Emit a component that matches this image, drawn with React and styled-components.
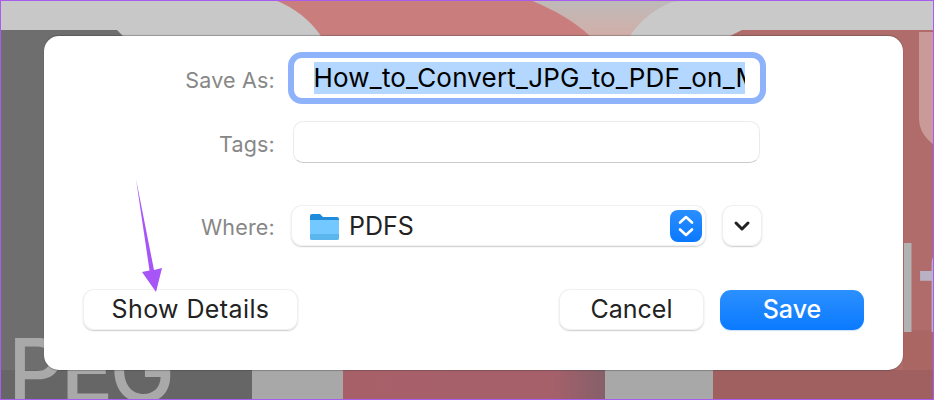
import React from "react";
import styled, { createGlobalStyle } from "styled-components";

const Global = createGlobalStyle`
  html, body { margin: 0; padding: 0; width: 934px; height: 400px; overflow: hidden; }
  body { font-family: Inter, "Liberation Sans", sans-serif; background: #6e6e6e; }
  * { box-sizing: border-box; }
`;

const Page = styled.div`
  position: relative;
  width: 934px;
  height: 400px;
  overflow: hidden;
  padding: 36px 31px 30px 44px;
`;

const Backdrop = styled.svg`
  position: absolute;
  inset: 0;
  width: 934px;
  height: 400px;
`;

const BackdropWord = styled.text`
  font-family: Inter, "Liberation Sans", sans-serif;
  font-weight: 500;
  letter-spacing: ${(p) => p.$tracking || 0}px;
  fill: ${(p) => p.$ink || "#a9a9a9"};
`;

const Frame = styled.div`
  position: absolute;
  inset: 0;
  border: 1.5px solid #a95cf0;
  pointer-events: none;
`;

const Dialog = styled.div`
  position: relative;
  width: 859px;
  height: 334px;
  background: #fff;
  border-radius: 15px;
  padding: 16px 39px 0;
  display: flex;
  flex-direction: column;
  box-shadow: 0 -1px 1px rgba(60, 60, 60, 0.35), 0 1px 1px rgba(60, 60, 60, 0.35);
`;

const Row = styled.div`
  display: flex;
  align-items: center;
  margin-top: ${(p) => p.$top || 0}px;
  margin-left: -39px;
`;

const Label = styled.div`
  width: 231px;
  flex: none;
  text-align: right;
  font-size: 21.5px;
  color: #878787;
  letter-spacing: 0.2px;
  padding-top: 3px;
`;

const FocusRing = styled.div`
  margin-left: 13px;
  width: 478px;
  height: 52px;
  border: 6.500px solid #8fb3fb;
  border-radius: 14px;
  background: #fff;
  padding: 3.500px 15.500px 3.500px 19.500px;
  overflow: hidden;
  display: flex;
`;

const Selected = styled.div`
  flex: 1;
  height: 32px;
  overflow: hidden;
  white-space: nowrap;
  background: #b3d7ff;
  color: #000;
  font-size: 26px;
  letter-spacing: 0.2px;
  line-height: 32px;
`;

const TagField = styled.div`
  margin-left: 18px;
  width: 467px;
  height: 42px;
  background: #fff;
  border-radius: 10px;
  border: 1px solid #ebebeb;
  border-bottom: 1.5px solid #cacaca;
`;

const raised = `
  background: #fff;
  border-radius: 11px;
  box-shadow: inset 0 0 0 1px #f0f0f0, 0 1px 1.5px rgba(0, 0, 0, 0.2);
`;

const Select = styled.div`
  ${raised}
  margin-left: 16px;
  width: 415px;
  height: 41px;
  display: flex;
  align-items: center;
  padding: 0 4px 0 18px;
  font-size: 25px;
  color: #222;
`;

const FolderGlyph = styled.svg`
  width: 30px;
  height: 28px;
  margin-right: 10px;
  flex: none;
`;

const SelectName = styled.span`
  flex: 1;
`;

const Stepper = styled.div`
  width: 32px;
  height: 32px;
  border-radius: 8px;
  background: linear-gradient(#2a8eff, #0a78ff);
  display: flex;
  align-items: center;
  justify-content: center;
`;

const IconButton = styled.div`
  ${raised}
  margin-left: 16px;
  width: 40px;
  height: 41px;
  display: flex;
  align-items: center;
  justify-content: center;
`;

const Footer = styled.div`
  display: flex;
  align-items: center;
  margin-top: 43px;
  gap: 16px;
`;

const Spacer = styled.div`
  flex: 1;
`;

const Button = styled.div`
  ${raised}
  width: ${(p) => p.$width}px;
  height: 41px;
  padding-bottom: 2px;
  display: flex;
  align-items: center;
  justify-content: center;
  font-size: 25px;
  letter-spacing: ${(p) => p.$tracking || 0}px;
  color: #222;
`;

const PrimaryButton = styled(Button)`
  background: linear-gradient(#2c90ff, #0a7aff);
  color: #fff;
  font-weight: 500;
  box-shadow: 0 1px 1px rgba(10, 100, 220, 0.2);
  height: 40px;
  margin-top: 1px;
`;

const Pointer = styled.svg`
  position: absolute;
  left: 130px;
  top: 175px;
  width: 40px;
  height: 120px;
`;

export default function App() {
  return (
    <>
      <Global />
      <Page>
        <Backdrop viewBox="0 0 934 400">
          <defs>
            <linearGradient id="fade" x1="0" x2="0" y1="0" y2="1">
              <stop offset="0" stopColor="#bdbaba" />
              <stop offset="1" stopColor="#d2aea8" />
            </linearGradient>
            <linearGradient id="floor" x1="0" x2="1" y1="0" y2="0">
              <stop offset="0" stopColor="#a86068" />
              <stop offset="0.8" stopColor="#a5606a" />
              <stop offset="1" stopColor="#85606a" />
            </linearGradient>
          </defs>
          <rect x="0" y="0" width="640" height="40" fill="#c97d7d" />
          <path d="M530 0H690V36H590C575 22 555 10 530 0Z" fill="url(#fade)" />
          <path d="M0 0H275C295 8 310 20 321 36H0Z" fill="#c8c8c8" />
          <path d="M630 36C640 20 655 9 672 2L690 0H934V36Z" fill="#c9c9c9" />
          <path d="M0 30H117L123 36V400H0Z" fill="#6e6e6e" />
          <path d="M730 36L742 30H934V400H730Z" fill="#b06c6a" />
          <path d="M919 32H934V145C925 138 919 130 919 118Z" fill="#c99a98" />
          <rect x="0" y="370" width="252" height="30" fill="#666666" />
          <rect x="252" y="370" width="91" height="30" fill="#a8a8a8" />
          <rect x="343" y="370" width="262" height="30" fill="url(#floor)" />
          <rect x="605" y="370" width="108" height="30" fill="#a8a8a8" />
          <rect x="713" y="370" width="221" height="30" fill="#a06060" />
          <rect x="903" y="330" width="31" height="40" fill="#a96663" />
          <BackdropWord x="8" y="402" fontSize="88" $tracking={-4}>PEG</BackdropWord>
          <rect x="904" y="243" width="7.500" height="89" fill="#b2b2b2" />
          <BackdropWord x="919" y="332" fontSize="112" $ink="#b9b2c4">f</BackdropWord>
        </Backdrop>
        <Dialog>
          <Row>
            <Label>Save As:</Label>
            <FocusRing>
              <Selected>How_to_Convert_JPG_to_PDF_on_Mac</Selected>
            </FocusRing>
          </Row>
          <Row $top={17}>
            <Label>Tags:</Label>
            <TagField />
          </Row>
          <Row $top={42}>
            <Label>Where:</Label>
            <Select>
              <FolderGlyph viewBox="0 0 30 28">
                <path d="M1 4a2 2 0 0 1 2-2h8l3 3h14a2 2 0 0 1 2 2v6H1Z" fill="#1f8cd9" />
                <path d="M1 8h29v18a2 2 0 0 1-2 2H3a2 2 0 0 1-2-2Z" fill="#73c9ff" />
                <path d="M1 22h29v4a2 2 0 0 1-2 2H3a2 2 0 0 1-2-2Z" fill="#5cb6ee" />
              </FolderGlyph>
              <SelectName>PDFS</SelectName>
              <Stepper>
                <svg width="20" height="26" viewBox="0 0 20 26" fill="none" stroke="#fff" strokeWidth="2.6" strokeLinecap="round" strokeLinejoin="round">
                  <path d="M4 9.5 10 4l6 5.500" />
                  <path d="M4 16.500 10 22l6-5.500" />
                </svg>
              </Stepper>
            </Select>
            <IconButton>
              <svg width="18" height="12" viewBox="0 0 18 12" fill="none" stroke="#222" strokeWidth="3" strokeLinecap="round" strokeLinejoin="round">
                <path d="M3 3l6 6 6-6" />
              </svg>
            </IconButton>
          </Row>
          <Footer>
            <Button $width={215} $tracking={0.4}>Show Details</Button>
            <Spacer />
            <Button $width={145}>Cancel</Button>
            <PrimaryButton $width={144}>Save</PrimaryButton>
          </Footer>
        </Dialog>
        <Pointer viewBox="130 175 40 120">
          <path d="M136 179 149.500 270.500 142 272 156 292 162 268 154 270Z" fill="#a855f7" />
        </Pointer>
        <Frame />
      </Page>
    </>
  );
}
